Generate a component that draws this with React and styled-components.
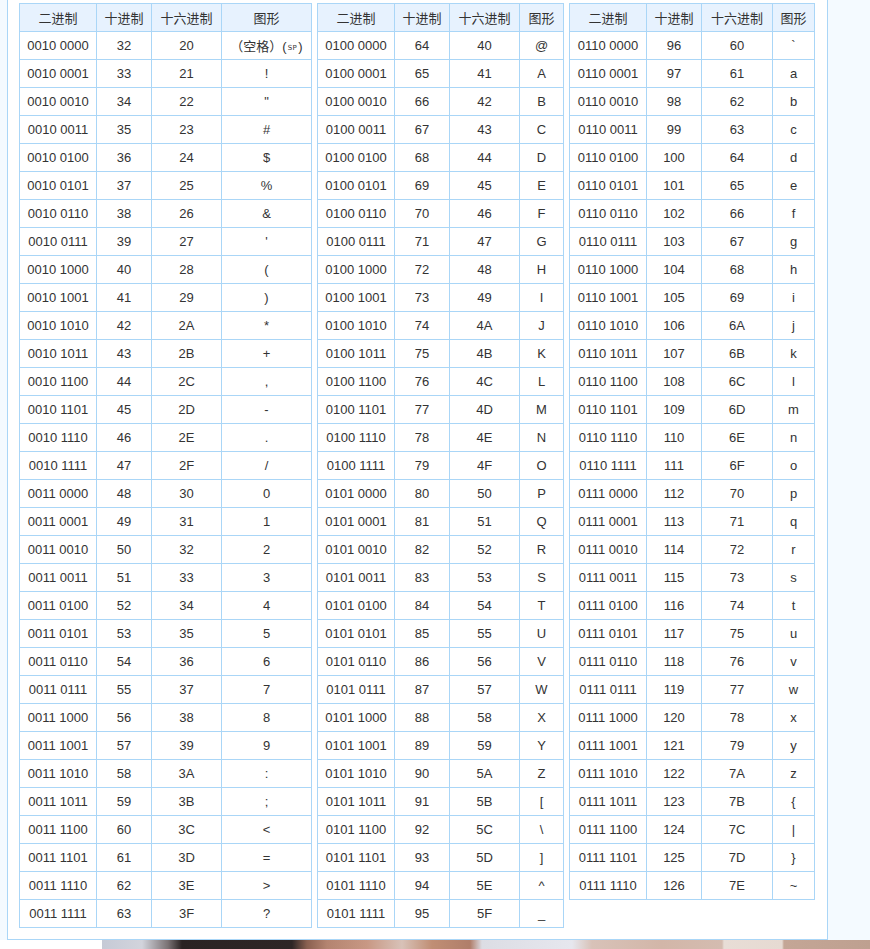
import React from 'react';
import styled, { createGlobalStyle } from 'styled-components';

const GlobalStyle = createGlobalStyle`
  html, body {
    margin: 0;
    padding: 0;
    background: #f4faff;
  }
  body {
    font-family: "Liberation Sans", Arial, "Noto Sans CJK SC", sans-serif;
    font-size: 13px;
    color: #333;
  }
`;

const Page = styled.div`
  padding-left: 7px;
  width: 863px;
`;

const Panel = styled.div`
  width: 821px;
  box-sizing: border-box;
  background: #fff;
  border: 1px solid #aad6f7;
  border-top: none;
  padding: 3px 12px 11px 11px;
`;

const Tables = styled.div`
  display: flex;
  align-items: flex-start;
  gap: 5px;
`;

const Table = styled.table`
  border-collapse: collapse;
  table-layout: fixed;
  width: ${(p) => p.$width}px;
`;

const Head = styled.th`
  height: 27px;
  padding: 0;
  font-weight: normal;
  background: #e7f2fe;
  border: 1px solid #aad6f7;
  font-family: "Noto Sans CJK SC", "Liberation Sans", sans-serif;
  font-size: 13px;
  color: #333;
  text-align: center;
`;

const Cell = styled.td`
  height: 27px;
  padding: 0;
  border: 1px solid #aad6f7;
  text-align: center;
  color: #333;
  white-space: nowrap;
`;

const SpaceLabel = styled.span`
  font-family: "Noto Sans CJK SC", "Liberation Sans", sans-serif;
`;

const SmallCaps = styled.span`
  font-family: "DejaVu Sans", sans-serif;
  font-size: 7px;
  letter-spacing: 0.5px;
  margin: 0 1px;
  vertical-align: 1px;
`;

const Strip = styled.div`
  background: #fff;
  display: flex;
  height: 10px;
`;

const Photo = styled.div`
  margin-left: 102px;
  flex: 1;
  background: linear-gradient(
    90deg,
    #c6cad6 0px,
    #d2d4dc 40px,
    #7a7274 66px,
    #2a2323 80px,
    #2e2626 190px,
    #8a6050 205px,
    #b48470 225px,
    #c89884 265px,
    #d8c2b8 300px,
    #c08e74 330px,
    #b07e6a 368px,
    #dcdde4 380px,
    #e6e7ee 470px,
    #d8c2b8 490px,
    #d2b6a8 560px,
    #d4bcb0 620px,
    #e8ddd6 622px,
    #e6dad2 680px,
    #c4a696 682px,
    #bea090 768px
  );
`;

const hex = (n) => n.toString(16).toUpperCase();
const bin = (n) => {
  const s = n.toString(2).padStart(8, '0');
  return `${s.slice(0, 4)} ${s.slice(4)}`;
};

const glyph = (n) => {
  if (n === 32) {
    return (
      <>
        <SpaceLabel>（空格）</SpaceLabel>(<SmallCaps>SP</SmallCaps>)
      </>
    );
  }
  return String.fromCharCode(n);
};

const groups = [
  { from: 32, to: 63, width: 292, cols: [77, 55, 70, 90] },
  { from: 64, to: 95, width: 246, cols: [77, 55, 70, 44] },
  { from: 96, to: 126, width: 245, cols: [77, 55, 71, 42] },
];

const AsciiTable = ({ from, to, width, cols }) => {
  const rows = [];
  for (let n = from; n <= to; n++) rows.push(n);
  return (
    <Table $width={width}>
      <colgroup>
        {cols.map((w, i) => (
          <col key={i} style={{ width: w }} />
        ))}
      </colgroup>
      <thead>
        <tr>
          <Head>二进制</Head>
          <Head>十进制</Head>
          <Head>十六进制</Head>
          <Head>图形</Head>
        </tr>
      </thead>
      <tbody>
        {rows.map((n) => (
          <tr key={n}>
            <Cell>{bin(n)}</Cell>
            <Cell>{n}</Cell>
            <Cell>{hex(n)}</Cell>
            <Cell>{glyph(n)}</Cell>
          </tr>
        ))}
      </tbody>
    </Table>
  );
};

export default function App() {
  return (
    <>
      <GlobalStyle />
      <Page>
        <Panel>
          <Tables>
            {groups.map((g) => (
              <AsciiTable key={g.from} {...g} />
            ))}
          </Tables>
        </Panel>
      </Page>
      <Strip>
        <Photo />
      </Strip>
    </>
  );
}
